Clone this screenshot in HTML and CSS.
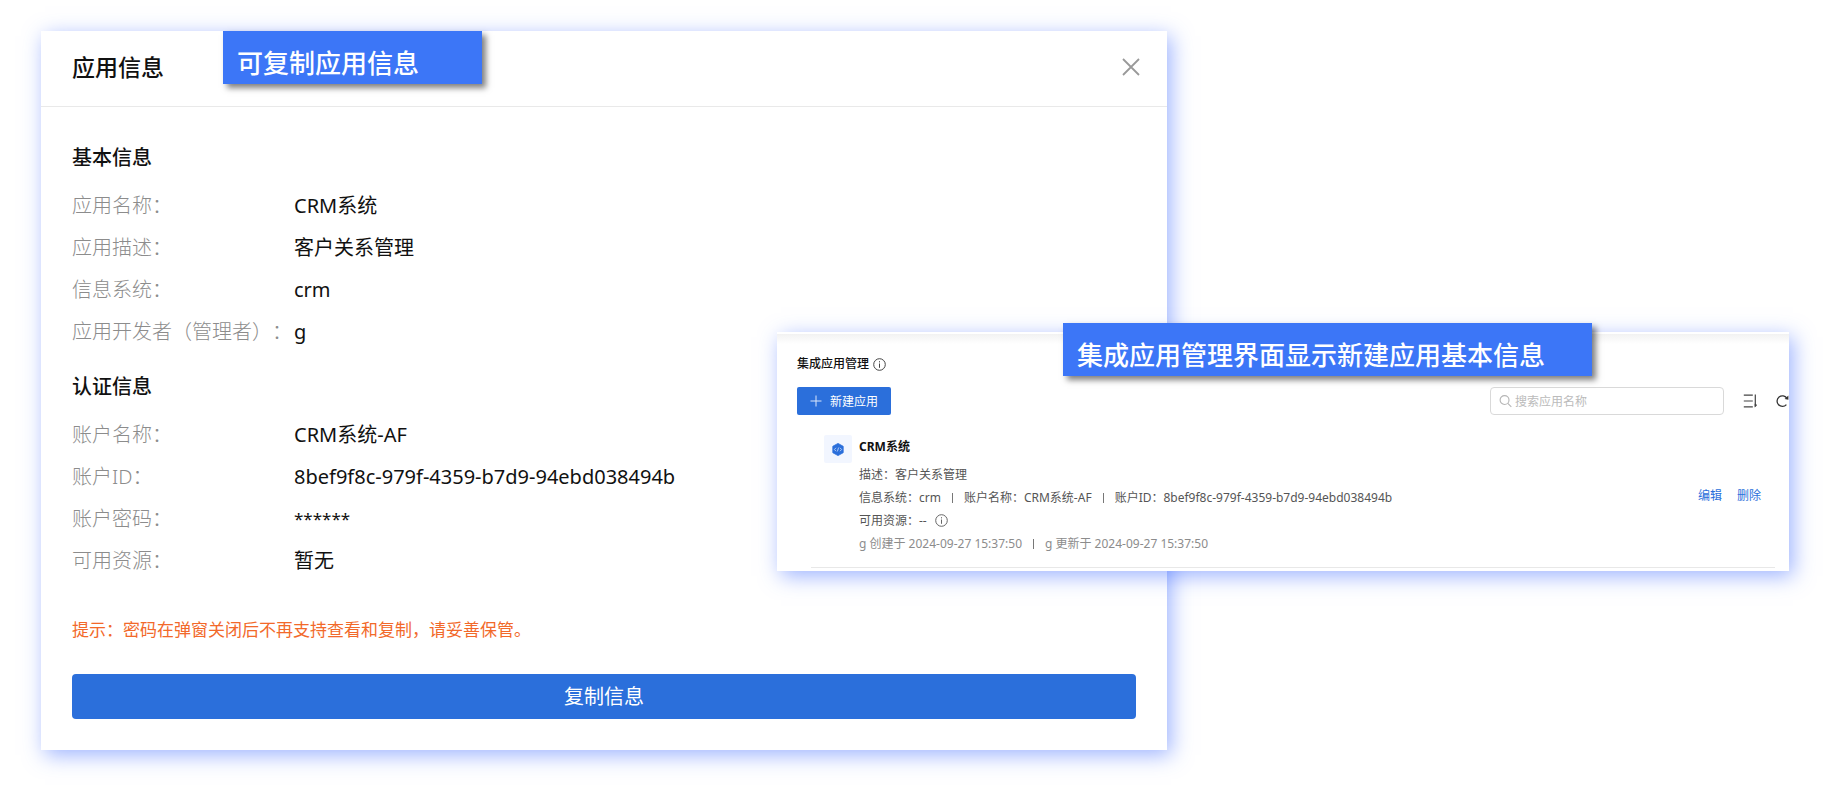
FILE: index.html
```html
<!DOCTYPE html>
<html lang="zh-CN">
<head>
<meta charset="utf-8">
<meta name="viewport" content="width=device-width, initial-scale=1">
<title>应用信息</title>
<link rel="stylesheet" href="styles.css">
</head>
<body>
<main class="stage">
  <section class="panel dialog">
    <header class="dialog-head">
      <h1 class="dialog-title">应用信息</h1>
      <button class="icon-btn" type="button" aria-label="关闭">
        <svg width="18" height="18" viewBox="0 0 18 18" fill="none" stroke="#999" stroke-width="1.8"><path d="M1 1l16 16M17 1L1 17"/></svg>
      </button>
    </header>
    <p class="callout callout-dialog">可复制应用信息</p>
    <div class="dialog-body">
      <h2 class="group-title">基本信息</h2>
      <dl class="fields">
        <dt>应用名称：</dt><dd>CRM系统</dd>
        <dt>应用描述：</dt><dd>客户关系管理</dd>
        <dt>信息系统：</dt><dd>crm</dd>
        <dt>应用开发者（管理者）：</dt><dd>g</dd>
      </dl>
      <h2 class="group-title group-next">认证信息</h2>
      <dl class="fields">
        <dt>账户名称：</dt><dd>CRM系统-AF</dd>
        <dt>账户ID：</dt><dd>8bef9f8c-979f-4359-b7d9-94ebd038494b</dd>
        <dt>账户密码：</dt><dd class="mask">******</dd>
        <dt>可用资源：</dt><dd>暂无</dd>
      </dl>
      <p class="tip">提示：密码在弹窗关闭后不再支持查看和复制，请妥善保管。</p>
      <button class="copy-btn" type="button">复制信息</button>
    </div>
  </section>

  <section class="panel manager">
    <p class="callout callout-manager">集成应用管理界面显示新建应用基本信息</p>
    <h2 class="manager-title">集成应用管理
      <svg width="13" height="13" viewBox="0 0 13 13" fill="none" stroke="#444"><circle cx="6.5" cy="6.5" r="5.8"/><path d="M6.5 5.5v4.3M6.5 3.2v1.2"/></svg>
    </h2>
    <div class="toolbar">
      <button class="new-btn" type="button">
        <svg width="12" height="12" viewBox="0 0 12 12" fill="none" stroke="#dbe7fb"><path d="M6 .5v11M.5 6h11"/></svg>
        新建应用
      </button>
      <div class="tools">
        <label class="search">
          <svg width="14" height="14" viewBox="0 0 14 14" fill="none" stroke="#b5b5b5" stroke-width="1.2"><circle cx="6" cy="6" r="4.8"/><path d="M9.5 9.5l3.8 3.8"/></svg>
          <input type="text" placeholder="搜索应用名称" aria-label="搜索应用名称">
        </label>
        <button class="icon-btn" type="button" aria-label="排序">
          <svg width="14" height="14" viewBox="0 0 14 14" fill="none" stroke="#444" stroke-width="1.2"><path d="M.8 1.2h9M.8 7h9M.8 12.8h9M12.3.5v12"/><path d="M11.7 13.4V9.8h1.2l1.1 1.4z" fill="#444" stroke="none"/></svg>
        </button>
        <button class="icon-btn" type="button" aria-label="刷新">
          <svg width="13" height="14" viewBox="0 0 13 14" fill="none" stroke="#333" stroke-width="1.3"><path d="M10.4 10.6A5.3 5.3 0 1 1 10.8 4.2"/><path d="M12.4 1.6v4.2L8.6 4.9z" fill="#333" stroke="none"/></svg>
        </button>
      </div>
    </div>
    <article class="app">
      <div class="app-icon">
        <svg width="12" height="13" viewBox="0 0 12 13"><path d="M6 .4l5.2 2.9v6.4L6 12.6.8 9.7V3.3z" fill="#2b6fdb" stroke="#2b6fdb" stroke-width=".8" stroke-linejoin="round"/><path d="M4 4.8L2.4 6.5 4 8.2M8 4.8l1.6 1.7L8 8.2M6.6 4.6l-1.2 3.8" fill="none" stroke="#cfe0fb" stroke-width=".8"/></svg>
      </div>
      <div class="app-main">
        <h3 class="app-name">CRM系统</h3>
        <p class="app-line">描述：客户关系管理</p>
        <p class="app-line"><span>信息系统：crm</span><i class="bar"></i><span>账户名称：CRM系统-AF</span><i class="bar"></i><span>账户ID：8bef9f8c-979f-4359-b7d9-94ebd038494b</span></p>
        <p class="app-line">可用资源：--
          <svg class="info" width="13" height="13" viewBox="0 0 13 13" fill="none" stroke="#666"><circle cx="6.5" cy="6.5" r="5.8"/><path d="M6.5 5.5v4.3M6.5 3.2v1.2"/></svg>
        </p>
        <p class="app-line app-meta"><span>g 创建于 2024-09-27 15:37:50</span><i class="bar"></i><span>g 更新于 2024-09-27 15:37:50</span></p>
      </div>
      <nav class="app-actions">
        <a href="#edit">编辑</a>
        <a href="#delete">删除</a>
      </nav>
    </article>
  </section>
</main>
</body>
</html>
```
FILE: styles.css
```css
* {
  box-sizing: border-box;
}

body {
  margin: 0;
  background: #fff;
  color: #111;
  font-family: "Noto Sans", "Noto Sans CJK SC", sans-serif;
  text-spacing-trim: space-all;
}

h1, h2, h3, p, dl, dd {
  margin: 0;
}

button, input {
  font: inherit;
}

.stage {
  display: grid;
  grid-template-columns: 41fr 736fr 390fr 622fr 35fr;
  padding: 31px 0 54px;
}

.panel {
  position: relative;
  grid-row: 1;
  min-width: 0;
  background: #fff;
  box-shadow: 4px 5px 20px rgba(60, 104, 255, 0.5);
}

.dialog {
  grid-column: 2 / 4;
}

.manager {
  grid-column: 3 / 5;
  align-self: start;
  margin-top: 301px;
  padding: 22px 0 3px 20px;
  background: linear-gradient(#fff 2px, #f2f2f2 2px, #fff 12px);
  font-size: 12px;
}

.icon-btn {
  display: flex;
  padding: 0;
  border: 0;
  background: none;
}

.callout {
  position: absolute;
  padding: 13px 14px 2px;
  background: #3c76f7;
  box-shadow: 4px 4px 6px rgba(0, 0, 0, 0.5);
  color: #fff;
  font-size: 26px;
  font-weight: 500;
  line-height: 38px;
  white-space: nowrap;
}

.callout-dialog {
  top: 0;
  left: 182px;
  width: 259px;
}

.callout-manager {
  top: -9px;
  left: 286px;
  width: 529px;
}

.dialog-head {
  display: flex;
  align-items: center;
  justify-content: space-between;
  height: 76px;
  padding: 0 27px 3px 31px;
  border-bottom: 1px solid #e9e9e9;
}

.dialog-title {
  font-size: 23px;
  font-weight: 500;
  line-height: 30px;
}

.dialog-body {
  padding: 36px 31px 31px;
  font-size: 20px;
  line-height: 30px;
}

.group-title {
  font-size: 20px;
  font-weight: 500;
}

.group-next {
  margin-top: 25px;
}

.fields {
  display: grid;
  grid-template-columns: 222px 1fr;
  row-gap: 12px;
  margin-top: 18px;
}

.fields dt {
  color: #8c8c8c;
  font-weight: 300;
  white-space: nowrap;
}

.fields .mask {
  font-size: 17px;
}

.tip {
  margin-top: 39px;
  color: #f2692a;
  font-size: 17px;
}

.copy-btn {
  display: block;
  width: 100%;
  height: 45px;
  margin-top: 29px;
  padding: 0;
  border: 0;
  border-radius: 4px;
  background: #2b6fdb;
  color: #fff;
}

.manager-title {
  display: flex;
  align-items: center;
  gap: 4px;
  font-size: 12px;
  font-weight: 500;
  line-height: 20px;
}

.toolbar {
  display: flex;
  align-items: center;
  justify-content: space-between;
  margin-top: 13px;
}

.new-btn {
  display: flex;
  align-items: center;
  gap: 8px;
  height: 28px;
  padding: 0 13px;
  border: 0;
  border-radius: 2px;
  background: #2b6fdb;
  color: #fff;
}

.tools {
  display: flex;
  align-items: center;
  gap: 19px;
}

.search {
  display: flex;
  align-items: center;
  gap: 3px;
  width: 234px;
  height: 28px;
  padding: 0 8px;
  border: 1px solid #d9d9d9;
  border-radius: 4px;
}

.search input {
  width: 100%;
  min-width: 0;
  padding: 0;
  border: 0;
  outline: 0;
  background: none;
}

.search input::placeholder {
  color: #bbb;
}

.app {
  display: flex;
  margin: 20px 14px 0;
  padding-bottom: 12px;
  border-bottom: 1px solid #e8e8e8;
}

.app-icon {
  display: flex;
  align-items: center;
  justify-content: center;
  width: 28px;
  height: 28px;
  margin-left: 13px;
  border-radius: 2px;
  background: #f2f6ff;
}

.app-main {
  flex: 1;
  min-width: 0;
  margin-left: 7px;
}

.app-name {
  margin-bottom: 4px;
  font-size: 12px;
  font-weight: 700;
  line-height: 24px;
}

.app-line {
  display: flex;
  align-items: center;
  color: #555;
  line-height: 23px;
  white-space: nowrap;
}

.app-meta {
  color: #8c8c8c;
}

.bar {
  width: 1px;
  height: 10px;
  margin: 0 11px;
  background: #777;
}

.info {
  margin-left: 8px;
}

.app-actions {
  display: flex;
  align-self: center;
  gap: 15px;
  margin-right: 14px;
}

.app-actions a {
  color: #2b6fdb;
  text-decoration: none;
}
```
